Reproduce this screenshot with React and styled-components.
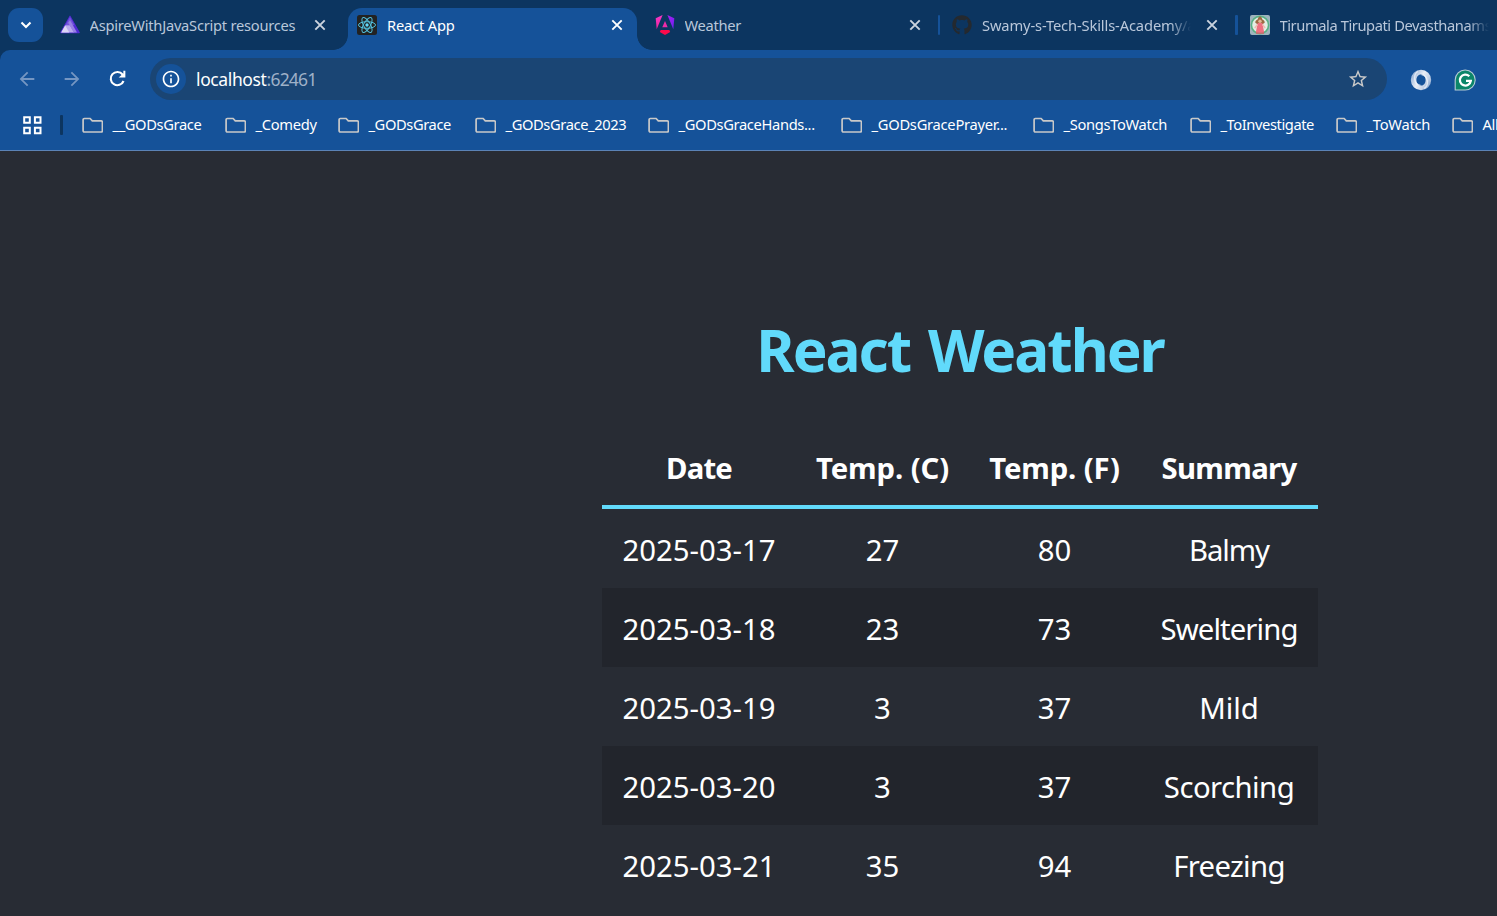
import React from "react";
import styled, { createGlobalStyle, css } from "styled-components";
import { MdArrowBack, MdArrowForward, MdStarOutline, MdInfoOutline } from "react-icons/md";
import { FaGithub } from "react-icons/fa";

const c = {
  strip: "#0c3560",
  bar: "#155299",
  omni: "#1a4574",
  page: "#282c34",
  cyan: "#61dafb",
  muted: "#b9c7da",
  icon: "#c9c9c9",
};

const GlobalStyle = createGlobalStyle`
  *, *::before, *::after { box-sizing: border-box; }
  html, body { margin: 0; height: 100%; overflow: hidden; background: ${c.page}; }
  body { font-family: "Noto Sans", "Open Sans", sans-serif; }
  svg { display: block; flex: none; }
`;

const Window = styled.div`
  height: 916px;
  display: flex;
  flex-direction: column;
  overflow: hidden;
  background: ${c.page};
`;

/* ---------- tab strip ---------- */
const TabStrip = styled.div`
  height: 50px;
  flex: none;
  display: flex;
  align-items: flex-start;
  padding: 8px 0 0 8px;
  background: ${c.strip};
  overflow: hidden;
`;

const TabSearch = styled.button`
  width: 35px;
  height: 34px;
  flex: none;
  display: grid;
  place-items: center;
  margin-right: 7.5px;
  padding: 0;
  border: 0;
  border-radius: 11px;
  background: ${c.bar};
`;

const flare = css`
  content: "";
  position: absolute;
  bottom: 0;
  width: 15px;
  height: 15px;
`;

const Tab = styled.div`
  position: relative;
  width: 297.5px;
  height: 42px;
  flex: none;
  display: flex;
  align-items: flex-start;
  padding-left: 9px;
`;

const TabShape = styled.div`
  position: absolute;
  inset: 0 8.5px 0 0;
  border-radius: 14px 14px 0 0;
  background: ${c.bar};
  &::before {
    ${flare}
    left: -15px;
    background: radial-gradient(circle at 0 0, transparent 14.5px, ${c.bar} 15.2px);
  }
  &::after {
    ${flare}
    right: -15px;
    background: radial-gradient(circle at 100% 0, transparent 14.5px, ${c.bar} 15.2px);
  }
`;

const Favicon = styled.span`
  position: relative;
  width: 20px;
  height: 20px;
  flex: none;
  margin: 7px 10px 0 0;
`;

const TabTitle = styled.span`
  position: relative;
  width: 209px;
  flex: none;
  overflow: hidden;
  white-space: nowrap;
  font-size: 14.7px;
  line-height: 22px;
  margin-top: 6px;
  letter-spacing: ${(p) => p.$track}px;
  color: ${(p) => (p.$active ? "#fff" : c.muted)};
  ${(p) => p.$fade && "mask-image: linear-gradient(90deg, #000 188px, transparent 209px);"}
`;

const CloseIcon = styled.svg`
  position: relative;
  width: 12px;
  height: 12px;
  margin: 11px 0 0 15px;
`;

const TabDivider = styled.span`
  width: 2.5px;
  height: 20px;
  margin: 7px 0 0 17px;
  border-radius: 1px;
  background: ${c.bar};
`;

/* ---------- toolbar ---------- */
const ToolbarBack = styled.div`
  flex: none;
  background: ${c.strip};
`;

const Toolbar = styled.div`
  height: 60px;
  display: flex;
  align-items: flex-start;
  padding: 8px 0 0 16px;
  border-top-left-radius: 10px;
  background: ${c.bar};
  overflow: hidden;
`;

const NavButton = styled.span`
  width: 45px;
  height: 42px;
  flex: none;
  display: flex;
  align-items: center;
  color: ${(p) => (p.$disabled ? "#7596c2" : "#fff")};
  svg { width: 22px; height: 22px; }
`;

const ReloadButton = styled(NavButton)`
  width: 44px;
  padding-bottom: 2px;
  svg { width: 23px; height: 23px; }
`;

const Omnibox = styled.div`
  width: 1237px;
  height: 42px;
  flex: none;
  display: flex;
  align-items: center;
  padding: 0 18.5px 0 6px;
  border-radius: 21px;
  background: ${c.omni};
`;

const SiteInfo = styled.span`
  width: 30px;
  height: 30px;
  display: grid;
  place-items: center;
  margin-right: 10px;
  border-radius: 50%;
  color: #fff;
  background: ${c.bar};
`;

const Url = styled.span`
  flex: 1;
  font-size: 17.5px;
  line-height: 24px;
  letter-spacing: -0.38px;
  color: #fff;
`;

const Port = styled.span`
  letter-spacing: -0.8px;
  color: #9fb1c8;
`;

const Extension = styled.span`
  width: 22px;
  height: 22px;
  flex: none;
  margin: 10.5px 0 0 22.5px;
`;

/* ---------- bookmarks ---------- */
const Bookmarks = styled.div`
  height: 41px;
  flex: none;
  display: flex;
  align-items: flex-start;
  padding-left: 23px;
  border-bottom: 1px solid #5b83b6;
  background: ${c.bar};
  overflow: hidden;
`;

const AppsGrid = styled.svg`
  width: 19px;
  height: 19px;
  margin-top: 6px;
`;

const BarDivider = styled.span`
  width: 2.5px;
  height: 20px;
  flex: none;
  margin: 5px 19px 0 18px;
  border-radius: 1px;
  background: ${c.strip};
`;

const Bookmark = styled.span`
  width: ${(p) => p.$w}px;
  flex: none;
  display: flex;
  gap: 9.5px;
  white-space: nowrap;
  color: #fff;
  font-size: 14.7px;
  line-height: 22px;
  letter-spacing: ${(p) => p.$track}px;
  padding-top: 3px;
  svg { margin-top: 4px; }
`;

/* ---------- page ---------- */
const Page = styled.main`
  flex: 1;
  display: flex;
  flex-direction: column;
  align-items: center;
  padding: 158px 0 0 423px;
  color: #fff;
  overflow: hidden;
`;

const Title = styled.h1`
  margin: 0;
  font-size: 58.5px;
  line-height: 80px;
  font-weight: 700;
  letter-spacing: -2px;
  word-spacing: 4.5px;
  color: ${c.cyan};
`;

const Table = styled.table`
  width: 716px;
  margin-top: 41px;
  table-layout: fixed;
  border-collapse: separate;
  border-spacing: 0;
  font-size: 29.3px;
  text-align: center;
`;

const Th = styled.th`
  width: ${(p) => p.$w}px;
  height: 79px;
  padding: 0;
  line-height: 40px;
  border-bottom: 4px solid ${c.cyan};
  letter-spacing: ${(p) => p.$track}px;
`;

const Row = styled.tr`
  height: 79px;
  &:nth-child(even) { background: #22252c; }
`;

const Td = styled.td`
  padding: 2px 0 0;
  line-height: 40px;
  letter-spacing: ${(p) => p.$track || 0}px;
`;

/* ---------- drawings ---------- */
const AspireLogo = () => (
  <svg width="20" height="20" viewBox="0 0 20 20">
    <path d="M10 1.2 19.2 17.6H.8Z" fill="#512bd4" stroke="#512bd4" strokeWidth="1.2" strokeLinejoin="round" />
    <path d="M10 2 14.6 10.2H5.4Z" fill="#7455dd" />
    <path d="M5.4 10.2h4.6l4.2 7.2H1.2Z" fill="#b9aaee" />
    <path d="M10 5.2 17 17.4h-3.2L8.2 7.8Z" fill="#9780e5" />
    <path d="M5.2 10.4 9.3 17.4H1.2Z" fill="#dcd5f6" />
  </svg>
);

const ReactLogo = () => (
  <svg width="20" height="20" viewBox="0 0 20 20">
    <rect width="20" height="20" rx="2.5" fill="#222" />
    <g fill="none" stroke="#53c1de" strokeWidth="1">
      <ellipse cx="10" cy="10" rx="8.5" ry="3.3" />
      <ellipse cx="10" cy="10" rx="8.5" ry="3.3" transform="rotate(60 10 10)" />
      <ellipse cx="10" cy="10" rx="8.5" ry="3.3" transform="rotate(120 10 10)" />
    </g>
    <circle cx="10" cy="10" r="1.7" fill="#61dafb" />
  </svg>
);

const AngularLogo = () => (
  <svg width="20" height="20" viewBox="0 0 20 20">
    <defs>
      <linearGradient id="ngl" x1="0" y1="0" x2="0" y2="1">
        <stop offset="0" stopColor="#f637c8" />
        <stop offset="1" stopColor="#f0249b" />
      </linearGradient>
      <linearGradient id="ngr" x1="0" y1="0" x2="1" y2="1">
        <stop offset="0" stopColor="#b01df0" />
        <stop offset="1" stopColor="#6a22f4" />
      </linearGradient>
    </defs>
    <path d="M7.6 0 1.7 14.2.7 3.3Z" fill="url(#ngl)" />
    <path d="M12.4 0 18.3 14.2 19.3 3.3Z" fill="url(#ngr)" />
    <path d="M10 6 12.7 12.2H7.3Z" fill="#ef2ba8" />
    <path d="M5.7 15h8.6l.9 2.1L10 20l-5.2-2.9Z" fill="#fb0a4b" />
  </svg>
);

const TempleLogo = () => (
  <svg width="20" height="20" viewBox="0 0 20 20">
    <rect width="20" height="20" rx="2" fill="#9eb4bd" />
    <circle cx="10" cy="10" r="8.6" fill="#e4ece3" stroke="#58b184" strokeWidth="1.6" />
    <path d="M10 1.6c1.8 0 1.8 2 2.4 3 1.5.5 2.3 1.5 2.3 3.2l-2.2 1.4h-5L5.3 7.8c0-1.7.8-2.7 2.3-3.2.6-1 .6-3 2.4-3Z" fill="#9d6a42" />
    <circle cx="10" cy="6.2" r="1.7" fill="#e2b596" />
    <path d="M7.7 8h4.6l1.9 9.5H5.8Z" fill="#ee6f80" />
    <path d="M7.5 9.5 4.8 13M12.5 9.5l2.7 3.5" stroke="#f3b6ae" strokeWidth="1.3" />
    <path d="M6 18h8" stroke="#d9636c" strokeWidth="1.5" />
  </svg>
);

const RingLogo = () => (
  <svg width="22" height="22" viewBox="0 0 22 22">
    <defs>
      <linearGradient id="ring" x1="0" y1="0.2" x2="1" y2="0.8">
        <stop offset="0" stopColor="#8fabd2" />
        <stop offset="0.45" stopColor="#e9eef6" />
        <stop offset="0.75" stopColor="#c3d1e6" />
        <stop offset="1" stopColor="#7f9fcb" />
      </linearGradient>
    </defs>
    <path fillRule="evenodd" d="M11 .8a10.200 10.200 0 1 1 0 20.400A10.200 10.200 0 0 1 11 .8Zm0 4.600c-3 0-4.600 2.600-4.600 5.600s1.600 5.600 4.600 5.600 4.600-2.600 4.600-5.600-1.600-5.600-4.600-5.600Z" fill="url(#ring)" />
    <path d="M8 2.500C3.200 5 3 15 10.500 16.400M14 19.500c4.800-2.500 5-12.500-2.500-13.900" fill="none" stroke="#f5f8fc" strokeWidth="1.300" opacity="0.7" />
  </svg>
);

const GrammarlyLogo = () => (
  <svg width="22" height="22" viewBox="0 0 22 22">
    <path d="M11.2 1a10 10 0 1 1 0 20H1.200V11a10 10 0 0 1 10-10Z" fill="#0c8669" stroke="#b7cdd6" strokeWidth="1.100" />
    <path d="M15.300 7.200A5.500 5.500 0 1 0 16.800 11.800H12" fill="none" stroke="#fff" strokeWidth="2.300" />
  </svg>
);

const ReloadIcon = () => (
  <svg viewBox="0 0 24 24">
    <path d="M18.300 14.600A6.900 6.900 0 1 1 17.300 7.800L19 9.500" fill="none" stroke="currentColor" strokeWidth="2.200" />
    <path d="M20.200 4v7h-7l2.700-2.500 2.200-1.700V4Z" fill="currentColor" />
  </svg>
);

const Folder = () => (
  <svg width="21.500" height="17" viewBox="0 0 21.500 17">
    <path d="M2.400 1.500h5.700l2.200 2.300h8.800c.8 0 1.300.5 1.300 1.300v8.600c0 .8-.5 1.300-1.300 1.300H2.400c-.8 0-1.300-.5-1.300-1.300V2.800c0-.8.5-1.300 1.300-1.300Z" fill="none" stroke={c.icon} strokeWidth="1.700" />
  </svg>
);

const tabs = [
  { title: "AspireWithJavaScript resources", track: -0.25, icon: <AspireLogo /> },
  { title: "React App", track: -0.18, icon: <ReactLogo />, active: true },
  { title: "Weather", track: -0.3, icon: <AngularLogo />, divider: true },
  { title: "Swamy-s-Tech-Skills-Academy/aspire", track: -0.13, icon: <FaGithub size={20} color="#24292f" />, divider: true, fade: true },
  { title: "Tirumala Tirupati Devasthanams (Official)", track: -0.42, icon: <TempleLogo />, fade: true },
];

const bookmarks = [
  ["__GODsGrace", 143, -0.38],
  ["_Comedy", 113, -0.3],
  ["_GODsGrace", 137, -0.4],
  ["_GODsGrace_2023", 173, -0.39],
  ["_GODsGraceHands...", 193, -0.35],
  ["_GODsGracePrayer...", 192, -0.26],
  ["_SongsToWatch", 157, -0.33],
  ["_ToInvestigate", 146, -0.42],
  ["_ToWatch", 116, -0.25],
  ["All Bookmarks", 130, -0.3],
];

const columns = [
  ["Date", 194, -0.8],
  ["Temp. (C)", 173, -0.1],
  ["Temp. (F)", 171, -0.15],
  ["Summary", 178, -0.65],
];

const forecasts = [
  ["2025-03-17", "27", "80", "Balmy", -1.1],
  ["2025-03-18", "23", "73", "Sweltering", -0.9],
  ["2025-03-19", "3", "37", "Mild", 0],
  ["2025-03-20", "3", "37", "Scorching", -0.55],
  ["2025-03-21", "35", "94", "Freezing", -0.65],
];

export default function App() {
  return (
    <Window>
      <GlobalStyle />
      <TabStrip>
        <TabSearch aria-label="Search tabs">
          <svg width="12" height="8" viewBox="0 0 12 8">
            <path d="M1.500 1.500 6 6l4.500-4.500" fill="none" stroke="#fff" strokeWidth="2.100" />
          </svg>
        </TabSearch>
        {tabs.map((t) => (
          <Tab key={t.title}>
            {t.active && <TabShape />}
            <Favicon>{t.icon}</Favicon>
            <TabTitle $active={t.active} $track={t.track} $fade={t.fade}>{t.title}</TabTitle>
            <CloseIcon viewBox="0 0 12 12">
              <path d="m1.300 1.300 9.400 9.400m0-9.400-9.400 9.400" stroke={t.active ? "#fff" : "#cbd3de"} strokeWidth="1.900" />
            </CloseIcon>
            {t.divider && <TabDivider />}
          </Tab>
        ))}
      </TabStrip>
      <ToolbarBack>
        <Toolbar>
          <NavButton $disabled><MdArrowBack /></NavButton>
          <NavButton $disabled><MdArrowForward /></NavButton>
          <ReloadButton><ReloadIcon /></ReloadButton>
          <Omnibox>
            <SiteInfo><MdInfoOutline size={20} /></SiteInfo>
            <Url>localhost<Port>:62461</Port></Url>
            <MdStarOutline size={22} color={c.icon} />
          </Omnibox>
          <Extension><RingLogo /></Extension>
          <Extension><GrammarlyLogo /></Extension>
        </Toolbar>
      </ToolbarBack>
      <Bookmarks>
        <AppsGrid viewBox="0 0 19 19">
          <path d="M1.200 1.200h5.600v5.600H1.200zM11.900 1.200h5.600v5.600h-5.600zM1.200 11.700h5.600v5.600H1.200zM11.900 11.700h5.600v5.600h-5.600z" fill="none" stroke="#fff" strokeWidth="2" />
        </AppsGrid>
        <BarDivider />
        {bookmarks.map(([label, w, track]) => (
          <Bookmark key={label} $w={w} $track={track}>
            <Folder />
            {label}
          </Bookmark>
        ))}
      </Bookmarks>
      <Page>
        <Title>React Weather</Title>
        <Table>
          <thead>
            <tr>
              {columns.map(([label, w, track]) => (
                <Th key={label} $w={w} $track={track}>{label}</Th>
              ))}
            </tr>
          </thead>
          <tbody>
            {forecasts.map(([date, tempC, tempF, summary, track]) => (
              <Row key={date}>
                <Td>{date}</Td>
                <Td>{tempC}</Td>
                <Td>{tempF}</Td>
                <Td $track={track}>{summary}</Td>
              </Row>
            ))}
          </tbody>
        </Table>
      </Page>
    </Window>
  );
}
